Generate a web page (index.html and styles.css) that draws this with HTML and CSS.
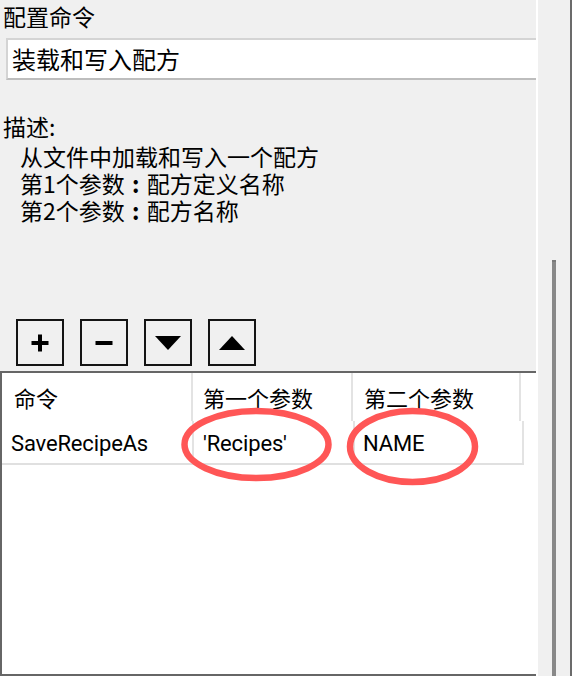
FILE: index.html
```html
<!DOCTYPE html>
<html lang="zh">
<head>
<meta charset="utf-8">
<link rel="stylesheet" href="styles.css">
</head>
<body>
<div class="app">
  <div class="main">
    <div class="title">配置命令</div>
    <div class="input">装载和写入配方</div>
    <div class="desc-label">描述:</div>
    <div class="desc">
      <div>从文件中加载和写入一个配方</div>
      <div>第1个参数<span class="colon">:</span>配方定义名称</div>
      <div>第2个参数<span class="colon">:</span>配方名称</div>
    </div>
    <div class="toolbar">
      <button class="btn" aria-label="add">
        <svg width="20" height="20" viewBox="0 0 20 20"><path d="M10 1.5v17M1.5 10h17" stroke="#000" stroke-width="4"/></svg>
      </button>
      <button class="btn" aria-label="remove">
        <svg width="20" height="20" viewBox="0 0 20 20"><path d="M1.5 10h17" stroke="#000" stroke-width="4"/></svg>
      </button>
      <button class="btn" aria-label="down">
        <svg width="28" height="16" viewBox="0 0 28 16"><path d="M1 1h26L14 15z" fill="#000"/></svg>
      </button>
      <button class="btn" aria-label="up">
        <svg width="28" height="16" viewBox="0 0 28 16"><path d="M1 15h26L14 1z" fill="#000"/></svg>
      </button>
    </div>
    <div class="table">
      <div class="row head">
        <div class="cell c1">命令</div>
        <div class="cell c2">第一个参数</div>
        <div class="cell c3">第二个参数</div>
      </div>
      <div class="row data">
        <div class="cell c1 latin">SaveRecipeAs</div>
        <div class="cell c2 latin">'Recipes'</div>
        <div class="cell c3 latin">NAME</div>
      </div>
      <svg class="marks" width="536" height="120" viewBox="0 0 536 120">
        <ellipse cx="256.5" cy="71.5" rx="72" ry="33.5" fill="none" stroke="#ff5656" stroke-width="6.5"/>
        <ellipse cx="412.5" cy="73.5" rx="62.5" ry="35.5" fill="none" stroke="#ff5656" stroke-width="6.5"/>
      </svg>
    </div>
  </div>
  <div class="sep"></div>
  <div class="track"><div class="thumb"></div></div>
  <div class="edge"></div>
</div>
</body>
</html>
```

FILE: styles.css
```css
html, body {
  margin: 0;
  padding: 0;
}
body {
  width: 572px;
  height: 676px;
  overflow: hidden;
  background: #f0f0f0;
  font-family: "Noto Sans CJK SC", sans-serif;
  color: #000;
}
.app {
  display: flex;
  height: 676px;
}
.main {
  width: 536px;
  display: flex;
  flex-direction: column;
}
.title {
  font-size: 23px;
  line-height: 28px;
  padding: 2px 0 0 3px;
  height: 36px;
}
.input {
  margin-left: 6px;
  height: 38px;
  border-top: 2px solid #d4d4d4;
  border-left: 2px solid #d4d4d4;
  border-bottom: 2px solid #bdbdbd;
  background: #fff;
  font-size: 24px;
  line-height: 38px;
  padding-left: 4px;
}
.desc-label {
  margin-top: 33px;
  padding-left: 3px;
  font-size: 23px;
  line-height: 26px;
}
.desc {
  margin-top: 4px;
  padding-left: 20px;
  font-size: 23px;
  line-height: 27px;
}
.colon {
  display: inline-block;
  width: 22px;
  text-align: center;
  font-weight: 700;
}
.toolbar {
  display: flex;
  gap: 16px;
  padding-left: 16px;
  margin-top: 95px;
  margin-bottom: 5px;
}
.btn {
  width: 48px;
  height: 47px;
  box-sizing: border-box;
  border: 2px solid #141414;
  background: #f0f0f0;
  padding: 0;
  margin: 0;
  display: flex;
  align-items: center;
  justify-content: center;
}
.table {
  position: relative;
  flex: 1;
  background: #fff;
  border-top: 2px solid #666;
  border-left: 2px solid #666;
  border-bottom: 2px solid #666;
}
.row {
  display: grid;
  grid-template-columns: 191px 160px 168px;
  width: 519px;
}
.cell {
  border-right: 2px solid #e3e3e3;
  font-size: 22px;
}
.head .cell {
  height: 48px;
  line-height: 48px;
}
.head .c1 { padding-left: 12px; }
.head .c2 { padding-left: 10px; }
.head .c3 { padding-left: 11px; }
.data {
  width: 522px;
  grid-template-columns: 192px 161px 169px;
  border-bottom: 2px solid #e0e0e0;
}
.data .cell {
  height: 42px;
  line-height: 46px;
}
.latin {
  font-family: Roboto, "Liberation Sans", sans-serif;
  font-size: 22px;
  letter-spacing: -0.15px;
}
.data .c1 { padding-left: 9px; }
.data .c2 { padding-left: 9px; }
.data .c3 { padding-left: 8px; }
.marks {
  position: absolute;
  left: -2px;
  top: 0;
  pointer-events: none;
}
.sep {
  width: 2px;
  background: #fff;
}
.track {
  width: 32px;
  background: #f0f0f0;
}
.thumb {
  margin: 260px 0 0 14px;
  width: 4px;
  height: 416px;
  background: #888;
  border-top: 2px solid #7a7a7a;
  box-sizing: border-box;
}
.edge {
  width: 2px;
  background: #6b6b6b;
}
```
